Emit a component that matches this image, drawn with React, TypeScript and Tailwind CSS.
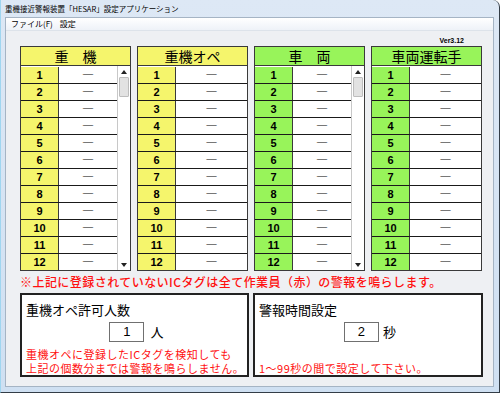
import React from 'react';

/**
 * HESAR settings window
 * Four tag-list tables plus two small setting boxes.
 */

interface TableDef {
  title: string;
  green: boolean;
  scroll: boolean;
}

const TABLES: TableDef[] = [
  { title: '重　機', green: false, scroll: true },
  { title: '重機オペ', green: false, scroll: false },
  { title: '車　両', green: true, scroll: true },
  { title: '車両運転手', green: true, scroll: false },
];

const ROWS = [1, 2, 3, 4, 5, 6, 7, 8, 9, 10, 11, 12];

const JP = "font-['Noto_Sans_CJK_JP',sans-serif]";
const NUM = "font-['Liberation_Sans','Noto_Sans_CJK_JP',sans-serif]";

function ScrollBar() {
  return (
    <div className="w-[13px] bg-white border-l border-[#c8c8c8] flex flex-col">
      <div className="h-[11px] flex items-center justify-center">
        <svg width="6" height="4" viewBox="0 0 6 4">
          <path d="M0 4 L3 0 L6 4 Z" fill="#222" />
        </svg>
      </div>
      <div className="h-[20px] mx-[1px] bg-[#e2e2e2] border border-[#bdbdbd] rounded-[1px]" />
      <div className="flex-1" />
      <div className="h-[11px] flex items-center justify-center">
        <svg width="6" height="4" viewBox="0 0 6 4">
          <path d="M0 0 L3 4 L6 0 Z" fill="#222" />
        </svg>
      </div>
    </div>
  );
}

function TagTable({ table }: { table: TableDef }) {
  const bg = table.green ? 'bg-[#98f45a]' : 'bg-[#f5f56c]';
  return (
    <div className="w-[111px] border border-[#3a3a3a] bg-white flex flex-col">
      <div
        className={`h-[19px] border-b border-[#3a3a3a] flex items-center justify-center text-[14px] leading-none text-black ${bg} ${JP}`}
      >
        {table.title}
      </div>
      <div className="flex">
        <div className="flex-1 flex flex-col">
          {ROWS.map((n, idx) => (
            <div
              key={n}
              className={`h-[17px] flex ${idx > 0 ? 'border-t border-[#1a1a1a]' : 'pt-[1px]'}`}
            >
              <div
                className={`w-[38px] border-r border-[#3a3a3a] flex items-center justify-center text-[11px] font-bold text-black ${bg} ${NUM}`}
              >
                {n}
              </div>
              <div className={`flex-1 flex items-center justify-center text-[12px] leading-none text-black ${JP}`}>
                ―
              </div>
            </div>
          ))}
        </div>
        {table.scroll && <ScrollBar />}
      </div>
    </div>
  );
}

export default function App() {
  return (
    <div className="w-[500px] h-[393px] overflow-hidden bg-white">
      <div className="w-[500px] h-[393px] flex flex-col bg-gradient-to-b from-[#dde8f5] to-[#cfe0f2] border-r border-b border-[#333d47] border-l border-l-[#9fd6f0] rounded-tr-[7px]">
        {/* Title bar */}
        <div className={`h-[17px] pl-[4px] flex items-center text-[7.5px] text-black ${JP}`}>
          重機接近警報装置「HESAR」設定アプリケーション
        </div>

        {/* Client area */}
        <div className="flex-1 ml-[4px] mr-[5px] mb-[5px] border border-[#a5b4c4] flex flex-col bg-[#eef0f3]">
          {/* Menu bar */}
          <div
            className={`h-[13px] pl-[5px] flex items-center gap-[7px] text-[8px] text-black bg-gradient-to-b from-[#ffffff] to-[#eef2f8] border-b border-[#dde3ea] ${JP}`}
          >
            <span>ファイル(F)</span>
            <span>設定</span>
          </div>

          <div className="flex-1 pl-[14px] flex flex-col">
            {/* Version */}
            <div className="h-[15px] flex items-end justify-end pr-[29px] pb-[2px]">
              <span className={`text-[7px] font-bold leading-none text-black ${NUM}`}>Ver3.12</span>
            </div>

            {/* Tables */}
            <div className="flex gap-[6px]">
              {TABLES.map((t) => (
                <TagTable key={t.title} table={t} />
              ))}
            </div>

            {/* Note */}
            <div className={`h-[22px] flex items-center text-[12px] font-medium tracking-[0.45px] text-[#ff1010] ${JP}`}>
              ※上記に登録されていないICタグは全て作業員（赤）の警報を鳴らします。
            </div>

            {/* Setting boxes */}
            <div className="flex gap-[4px]">
              <div className="w-[229px] h-[84px] border-2 border-[#222] bg-white pl-[4px] pt-[7px] flex flex-col">
                <div className={`text-[13px] leading-[16px] text-black ${JP}`}>重機オペ許可人数</div>
                <div className="mt-[4px] flex items-center justify-center gap-[6px]">
                  <div className={`w-[35px] h-[20px] border border-[#707070] bg-white flex items-center justify-center text-[13px] text-black ${NUM}`}>
                    1
                  </div>
                  <span className={`text-[13px] text-black ${JP}`}>人</span>
                </div>
                <div className={`mt-[5px] text-[11px] leading-[14px] tracking-[0.5px] whitespace-nowrap text-[#ff1010] ${JP}`}>
                  <div>重機オペに登録したICタグを検知しても</div>
                  <div>上記の個数分までは警報を鳴らしません。</div>
                </div>
              </div>

              <div className="w-[230px] h-[84px] border-2 border-[#222] bg-white pl-[4px] pt-[7px] flex flex-col">
                <div className={`text-[13px] leading-[16px] text-black ${JP}`}>警報時間設定</div>
                <div className="mt-[4px] flex items-center justify-center gap-[4px]">
                  <div className={`w-[35px] h-[20px] border border-[#707070] bg-white flex items-center justify-center text-[13px] text-black ${NUM}`}>
                    2
                  </div>
                  <span className={`text-[13px] text-black ${JP}`}>秒</span>
                </div>
                <div className={`mt-[19px] text-[11px] leading-[14px] tracking-[0.5px] whitespace-nowrap text-[#ff1010] ${JP}`}>
                  1〜99秒の間で設定して下さい。
                </div>
              </div>
            </div>
          </div>
        </div>
      </div>
    </div>
  );
}
